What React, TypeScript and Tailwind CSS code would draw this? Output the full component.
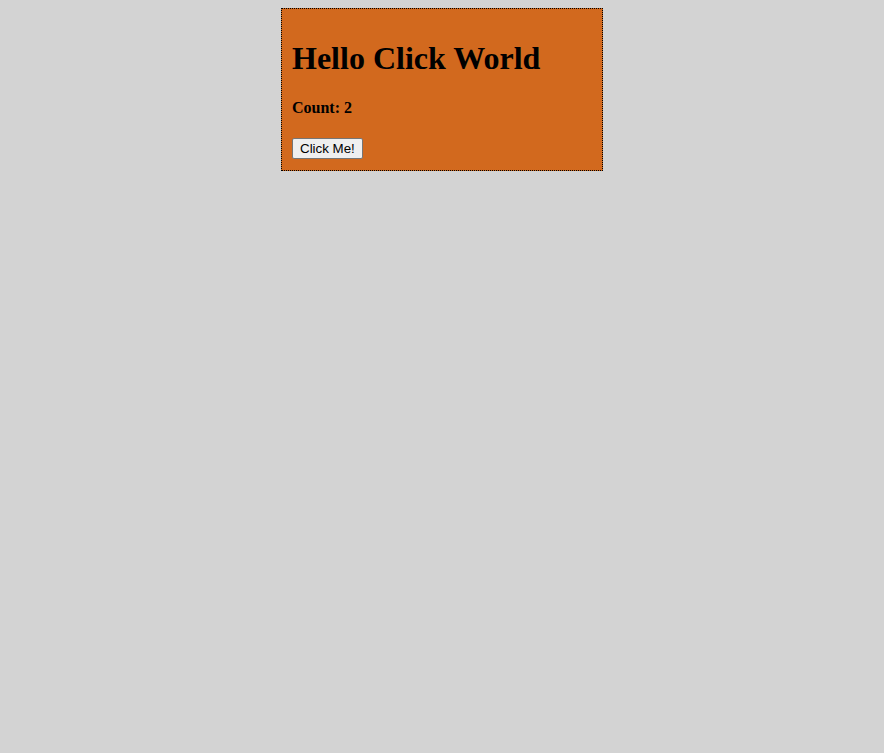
import { useState } from "react";

export default function App() {
  const [count, setCount] = useState(2);

  return (
    <div className="min-h-screen w-full bg-[#d3d3d3] pt-2 font-['Liberation_Serif','Times_New_Roman',serif] text-black">
      <div className="mx-auto w-[322px] border border-dotted border-black bg-[#d2691e] p-[10px]">
        <h1 className="my-[21.44px] text-[32px] font-bold leading-[normal]">
          Hello Click World
        </h1>
        <h4 className="mt-[21.28px] mb-[19.28px] text-[16px] font-bold leading-[normal]">
          Count: {count}
        </h4>
        <button
          onClick={() => setCount(count + 1)}
          className="rounded-[2px] border border-[#767676] bg-[#efefef] px-[7px] py-[2px] font-['Liberation_Sans',Arial,sans-serif] text-[13.33px] leading-[normal] text-black hover:bg-[#e5e5e5]"
        >
          Click Me!
        </button>
      </div>
    </div>
  );
}
